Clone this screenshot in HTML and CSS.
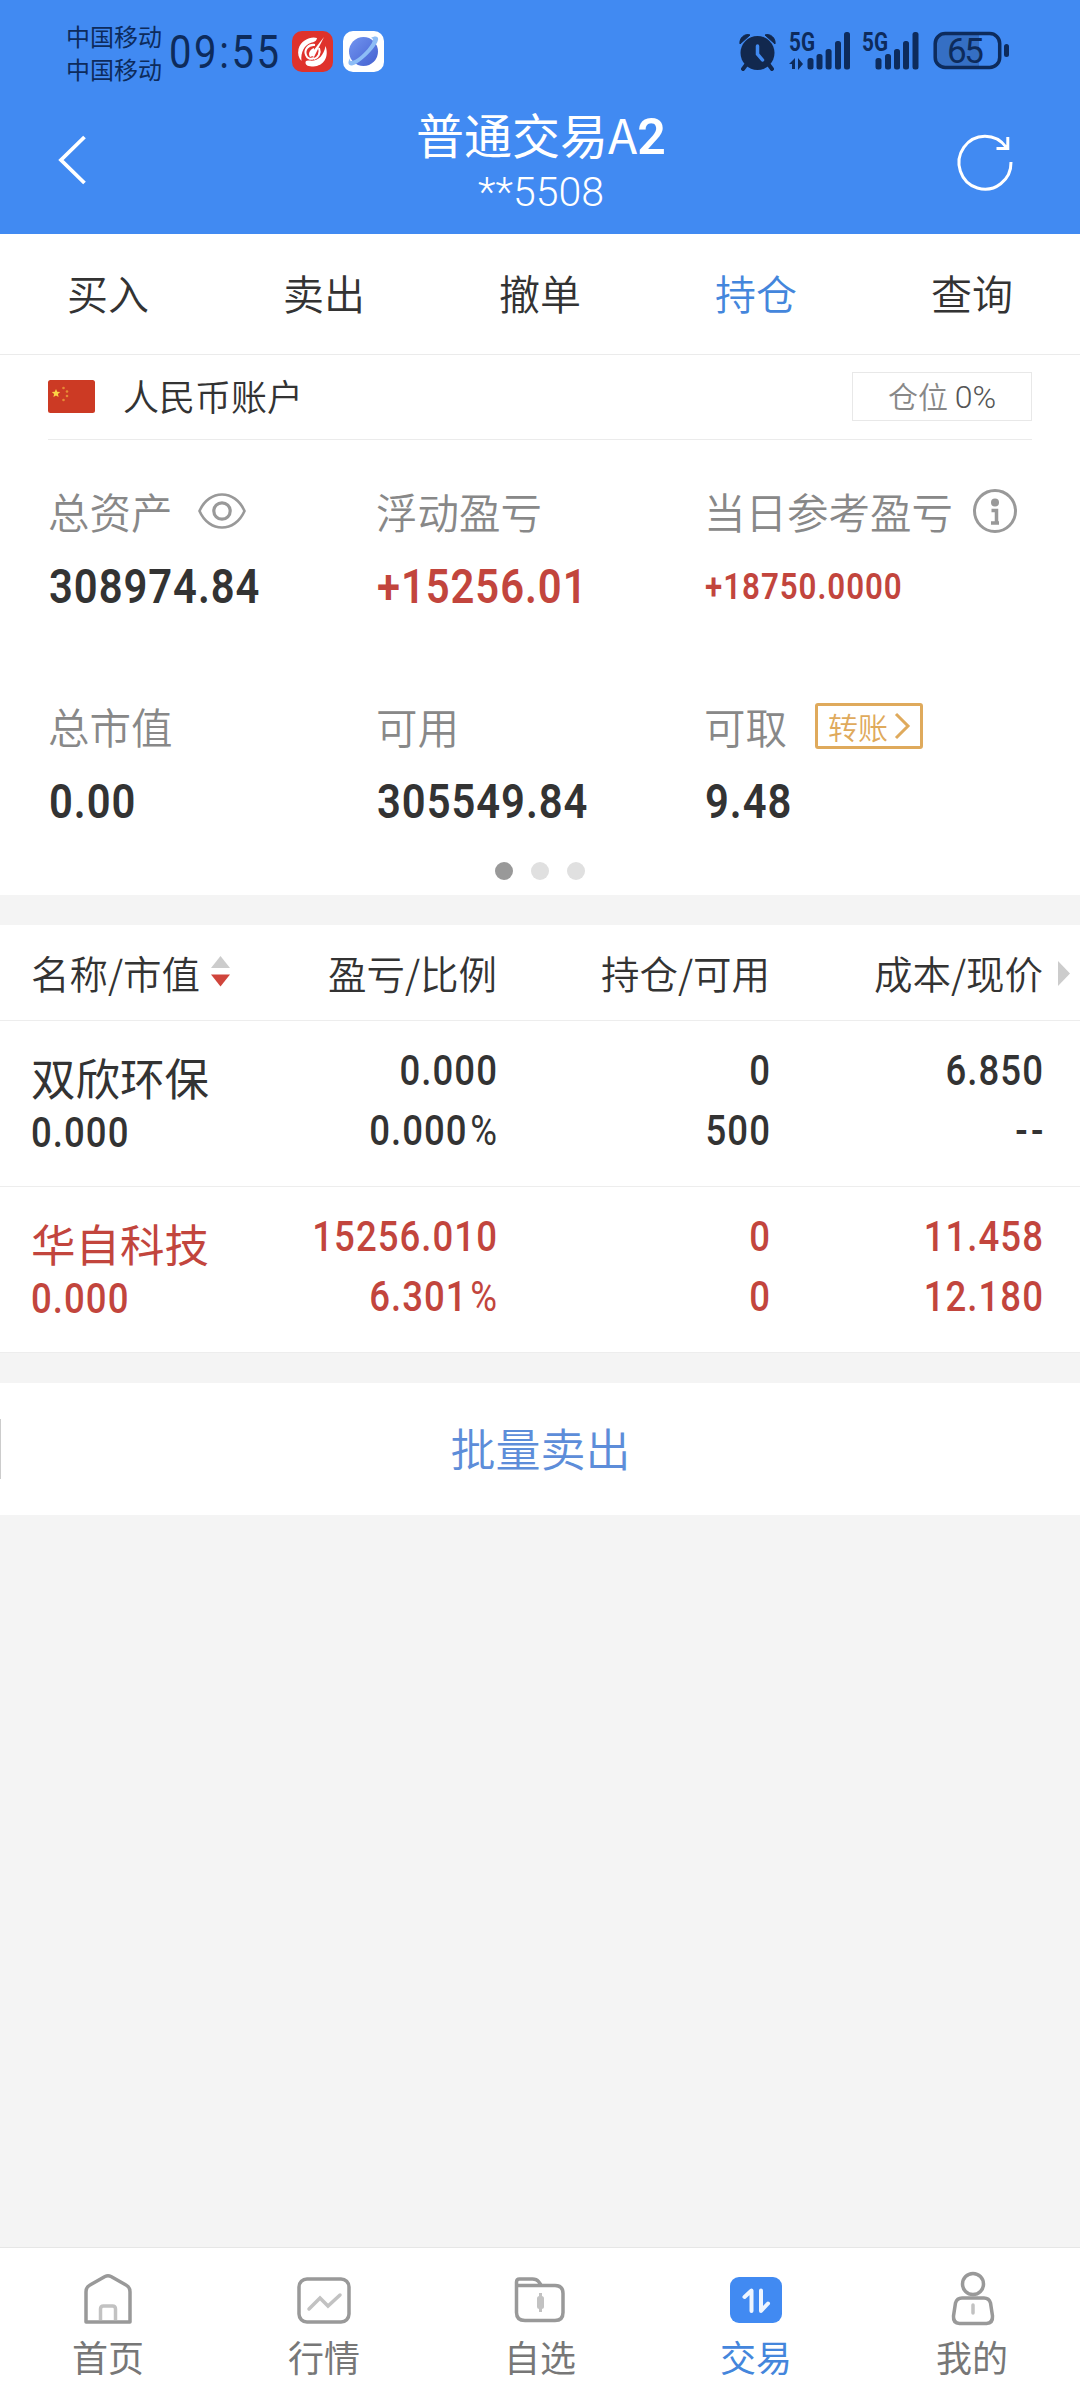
FILE: index.html
```html
<!DOCTYPE html>
<html lang="zh-CN">
<head>
<meta charset="utf-8">
<title>普通交易</title>
<link rel="stylesheet" href="styles.css">
</head>
<body>
<div id="header">
	<div class="status">
		<div class="carrier"><p>中国移动</p><p>中国移动</p></div>
		<span class="clock num">09:55</span>
		<svg class="app" width="41" height="41" viewBox="0 0 41 41">
			<rect width="41" height="41" rx="10" fill="#df322c"/>
			<path d="M25 7C19 5 9 9 6.500 18c-1 5 0 9 3 12-1-9 3-16 9-18 4-1 6-2 6.500-5z" fill="#fff"/>
			<path d="M33.500 15c4 11-2 20-12 20.500-5 0-8-1-8-4 0-2 2-2 4-2 8 1 14-4 16-14.500z" fill="#fff"/>
			<path d="M32 6L18 24l4 2z" fill="#fff"/>
			<path d="M23 14c-7-1-11 5-9 10 1 3 4 5 8 3M27 17c2 5-1 10-5 11" stroke="#fff" stroke-width="2" fill="none"/>
			<path d="M22 17c-5 2-6 6-4 9 4-1 5-4 4-9z" fill="#fff"/>
		</svg>
		<svg class="app" width="41" height="41" viewBox="0 0 41 41">
			<defs><linearGradient id="ball" x1="0" y1="0" x2="1" y2="1"><stop offset="0" stop-color="#7295f0"/><stop offset="1" stop-color="#4360d0"/></linearGradient></defs>
			<rect width="41" height="41" rx="10" fill="#fff"/>
			<circle cx="20.500" cy="20.500" r="14.500" fill="url(#ball)"/>
			<path d="M8 26c-4 5-3 9 1 8.500C17 33 37 13 35 7c-1-2-4-2-7 0 8 0-11 22-19 23-3 0-2-2-1-4z" fill="#8dbdf6"/>
		</svg>
		<svg class="signals" width="272" height="41" viewBox="738 31 272 41">
			<g fill="#12284e">
				<circle cx="757.500" cy="53" r="17"/>
				<path d="M740 44c-1-6 5-11 10-9zM775 44c1-6-5-11-10-9z" stroke="#12284e" stroke-width="1"/>
				<path d="M746 65l-3 4M769 65l3 4" stroke="#12284e" stroke-width="4" stroke-linecap="round"/>
				<path d="M757.500 46v8l5 6" fill="none" stroke="#418af2" stroke-width="3.500" stroke-linecap="round"/>
			</g>
			<g fill="#0d2b5c" class="sig">
				<text x="789" y="50.500" textLength="26" lengthAdjust="spacingAndGlyphs">5G</text>
				<path d="M789 64l6-6v11h-3v-5zM798 58l5 6-5 6z"/>
				<rect x="807.500" y="58" width="6" height="11.500" rx="2.500"/><rect x="816.500" y="54" width="6" height="15.500" rx="2.500"/><rect x="825.600" y="49" width="6" height="20.500" rx="2.500"/><rect x="835" y="41" width="6" height="28.500" rx="2.500"/><rect x="844" y="32" width="6" height="37.500" rx="2.500"/>
				<text x="862" y="50.500" textLength="26" lengthAdjust="spacingAndGlyphs">5G</text>
				<rect x="875.500" y="58" width="6" height="11.500" rx="2.500"/><rect x="885" y="54" width="6" height="15.500" rx="2.500"/><rect x="894" y="49" width="6" height="20.500" rx="2.500"/><rect x="903" y="41" width="6" height="28.500" rx="2.500"/><rect x="912.500" y="32" width="6" height="37.500" rx="2.500"/>
			</g>
			<path d="M945 35h34v31h-34q-9 0-9-9V44q0-9 9-9z" fill="#356fc4"/>
			<rect x="935.200" y="33.500" width="64.500" height="34" rx="10" fill="none" stroke="#0d2b5c" stroke-width="3.500"/>
			<rect x="1004" y="44" width="5" height="13" rx="2.500" fill="#0d2b5c"/>
			<text x="947" y="62.500" class="level" textLength="37" lengthAdjust="spacing">65</text>
		</svg>
	</div>
	<div class="bar">
		<svg width="32" height="54" viewBox="0 0 32 54"><path d="M27.500 4L4 27l23.500 23" fill="none" stroke="#fff" stroke-width="3.800"/></svg>
		<div class="title">
			<h1>普通交易A<b>2</b></h1>
			<p>**5508</p>
		</div>
		<svg width="56" height="58" viewBox="0 0 56 58"><path d="M54 29A26 26.500 0 1 1 49 14M39.500 15.500h11.300V4" fill="none" stroke="#fff" stroke-width="3"/></svg>
	</div>
</div>
<ul id="tabs">
	<li>买入</li>
	<li>卖出</li>
	<li>撤单</li>
	<li class="active">持仓</li>
	<li>查询</li>
</ul>
<div id="account">
	<div class="type">
		<svg width="47" height="33" viewBox="0 0 47 33">
			<rect width="47" height="33" rx="2.500" fill="#cc3a24"/>
			<path d="M8 9l1.200 2.800 3 .2-2.300 2 .7 3L8 15.400 5.400 17l.7-3-2.300-2 3-.2z" fill="#fbd545"/>
			<g fill="#e58b35"><circle cx="15.500" cy="8" r="1.300"/><circle cx="19" cy="11.500" r="1.300"/><circle cx="19" cy="16" r="1.300"/><circle cx="15.500" cy="20" r="1.300"/></g>
		</svg>
		<span>人民币账户</span>
		<div class="position">仓位 <em>0%</em></div>
	</div>
	<div class="assets">
		<div class="item">
			<p>总资产<svg class="eye" width="48" height="38" viewBox="0 0 48 38"><path d="M1.500 19C11-3 37-3 46.500 19 37 41 11 41 1.500 19z" fill="none" stroke="#999" stroke-width="2.600"/><circle cx="24" cy="19" r="8.200" fill="none" stroke="#999" stroke-width="3.200"/></svg></p>
			<strong class="num">308974.84</strong>
		</div>
		<div class="item">
			<p>浮动盈亏</p>
			<strong class="num red">+15256.01</strong>
		</div>
		<div class="item">
			<p>当日参考盈亏<svg class="info" width="44" height="44" viewBox="0 0 44 44"><circle cx="22" cy="22" r="20.500" fill="none" stroke="#999" stroke-width="3"/><circle cx="22" cy="13.500" r="4" fill="#999"/><path d="M18.500 21.500h5v12M18 34h8" fill="none" stroke="#999" stroke-width="3.500"/></svg></p>
			<strong class="num red small">+18750.0000</strong>
		</div>
		<div class="item">
			<p>总市值</p>
			<strong class="num">0.00</strong>
		</div>
		<div class="item">
			<p>可用</p>
			<strong class="num">305549.84</strong>
		</div>
		<div class="item">
			<p>可取<a class="transfer">转账<svg width="16" height="28" viewBox="0 0 16 28"><path d="M2 2l12 12L2 26" fill="none" stroke="#dfaa5c" stroke-width="3"/></svg></a></p>
			<strong class="num">9.48</strong>
		</div>
	</div>
	<div class="dots"><i class="on"></i><i></i><i></i></div>
</div>
<div id="stocks">
	<div class="row head">
		<div>名称/市值<svg width="19" height="31" viewBox="0 0 19 31"><path d="M9.500 0L19 12H0z" fill="#ccc"/><path d="M9.500 30.500L19 18.500H0z" fill="#d0453c"/></svg></div>
		<div>盈亏/比例</div>
		<div>持仓/可用</div>
		<div>成本/现价</div>
		<svg class="more" width="12" height="25" viewBox="0 0 12 25"><path d="M0 0l12 12.500L0 25z" fill="#ccc"/></svg>
	</div>
	<div class="row">
		<div><h2>双欣环保</h2><span class="num">0.000</span></div>
		<div><span class="num">0.000</span><span class="num">0.000<em>%</em></span></div>
		<div><span class="num">0</span><span class="num">500</span></div>
		<div><span class="num">6.850</span><span class="num dash">--</span></div>
	</div>
	<div class="row red">
		<div><h2>华自科技</h2><span class="num">0.000</span></div>
		<div><span class="num">15256.010</span><span class="num">6.301<em>%</em></span></div>
		<div><span class="num">0</span><span class="num">0</span></div>
		<div><span class="num">11.458</span><span class="num">12.180</span></div>
	</div>
</div>
<div id="sell"><a>批量卖出</a></div>
<ul id="nav">
	<li>
		<svg width="54" height="56" viewBox="0 0 54 56"><path d="M5 51V21q0-5 4-7L24 5.500q3-1.500 6 0L45 14q4 2 4 7v30z" fill="none" stroke="#999" stroke-width="3.500" stroke-linejoin="round"/><path d="M19.500 49V38q0-3 3-3h9q3 0 3 3v11" fill="none" stroke="#c2c2c2" stroke-width="3.500"/></svg>
		首页
	</li>
	<li>
		<svg width="54" height="56" viewBox="0 0 54 56"><rect x="2" y="8" width="50" height="43" rx="8" fill="none" stroke="#999" stroke-width="3.500"/><path d="M12 38l11-11 8 8 12-11" fill="none" stroke="#c2c2c2" stroke-width="3.500" stroke-linecap="round"/></svg>
		行情
	</li>
	<li>
		<svg width="54" height="56" viewBox="0 0 54 56"><path d="M3.500 15v-4q0-3 3-3h13q4 0 6 2.500l3 4H42q8 0 8 8v19q0 8-8 8H12q-8.500 0-8.500-8V14.500H28" fill="none" stroke="#999" stroke-width="3.500"/><path d="M27.500 22v19" stroke="#c2c2c2" stroke-width="3"/><rect x="24" y="25" width="7" height="13" rx="2.500" fill="#c2c2c2"/></svg>
		自选
	</li>
	<li class="active">
		<svg width="54" height="56" viewBox="0 0 54 56"><rect x="1" y="6" width="52" height="46" rx="9" fill="#418af2"/><path d="M15.500 26l7-6.500V40M32 19.500V40l7-7.500" fill="none" stroke="#eef5ff" stroke-width="4" stroke-linecap="round" stroke-linejoin="round"/></svg>
		交易
	</li>
	<li>
		<svg width="54" height="56" viewBox="0 0 54 56"><g fill="none" stroke="#999" stroke-width="3.500"><circle cx="28" cy="13" r="10.500"/><path d="M17 27h22q5 0 6.500 5l2 13q.5 7-6 7.500h-27q-6.500-.5-6-7.500l2-13q1.500-5 6.500-5z"/></g><path d="M28 34v8" stroke="#c2c2c2" stroke-width="3.500" stroke-linecap="round"/></svg>
		我的
	</li>
</ul>
</body>
</html>
```
FILE: styles.css
```css
*{
	margin:0;
	padding:0;
	box-sizing:border-box;
}
body{
	width:1080px;
	height:2400px;
	display:flex;
	flex-direction:column;
	background:#f4f4f4;
	color:#333;
	font-family:"Noto Sans CJK SC",sans-serif;
	font-weight:350;
	overflow:hidden;
}
ul{
	list-style:none;
}
em{
	font-style:normal;
}
svg{
	display:block;
	flex:none;
	overflow:visible;
}
.num{
	display:block;
	font-family:Roboto,sans-serif;
	font-weight:500;
	transform:scaleX(.87);
	transform-origin:left;
	white-space:nowrap;
}
.red{
	color:#c2453d;
}
/* header */
#header{
	height:234px;
	background:#418af2;
	color:#fff;
}
.status{
	height:103px;
	padding:0 70px 0 66px;
	display:flex;
	align-items:center;
	color:#0d2b5c;
}
.carrier{
	width:103px;
	padding-top:1px;
	font-size:24px;
	line-height:33px;
	font-weight:400;
}
.clock{
	width:123px;
	font-size:46px;
	font-weight:400;
	letter-spacing:3px;
}
.app{
	margin-right:10px;
}
.signals{
	margin-left:auto;
}
.sig text{
	font:700 25px Roboto,sans-serif;
}
.level{
	font:400 35px Roboto,sans-serif;
	fill:#0d2b5c;
}
.bar{
	height:131px;
	padding:0 67px 0 57px;
	display:flex;
	justify-content:space-between;
}
.bar svg{
	margin-top:30px;
}
.title{
	margin-left:36px;
	text-align:center;
}
.title h1{
	height:65px;
	font-size:48px;
	line-height:61px;
	font-weight:400;
}
.title b{
	font-family:Roboto,sans-serif;
	font-weight:600;
	font-size:50px;
	line-height:1;
}
.title p{
	font-family:Roboto,sans-serif;
	font-size:41px;
	font-weight:300;
	line-height:48px;
}
/* tabs */
#tabs{
	height:121px;
	display:flex;
	background:#fff;
	border-bottom:1px solid #ebebeb;
}
#tabs li{
	flex:1;
	text-align:center;
	font-size:41px;
	line-height:116px;
}
#tabs .active{
	color:#4486dc;
}
/* account */
#account{
	height:540px;
	padding:0 48px;
	background:#fff;
}
.type{
	height:85px;
	padding-bottom:1px;
	display:flex;
	align-items:center;
	border-bottom:1px solid #ebebeb;
	font-size:36px;
}
.type span{
	height:56px;
	margin-left:28px;
	line-height:52px;
}
.position{
	width:180px;
	height:49px;
	margin-left:auto;
	border:1px solid #e8e8e8;
	text-align:center;
	font-size:30px;
	line-height:45px;
	color:#888;
}
.position em{
	font-family:Roboto,sans-serif;
	font-size:32px;
	font-weight:300;
	color:#555;
}
.assets{
	display:grid;
	grid-template-columns:repeat(3,328px);
	grid-template-rows:215px 166px;
	padding-top:39px;
}
.item p{
	height:64px;
	padding-bottom:1px;
	display:flex;
	align-items:center;
	font-size:41.500px;
	line-height:60px;
	color:#888;
	white-space:nowrap;
}
.item .num{
	margin-left:1px;
	font-size:48px;
	line-height:88px;
	font-weight:600;
	letter-spacing:1.100px;
}
.item .small{
	font-size:36px;
}
.eye{
	margin-left:25px;
}
.info{
	margin-left:20px;
}
.transfer{
	width:108px;
	height:46px;
	margin-left:28px;
	border:3px solid #dfaa5c;
	border-radius:3px;
	display:flex;
	align-items:center;
	justify-content:center;
	gap:6px;
	font-size:30px;
	line-height:38px;
	color:#dfaa5c;
}
.dots{
	padding-top:2px;
	display:flex;
	justify-content:center;
	gap:18px;
}
.dots i{
	width:18px;
	height:18px;
	border-radius:50%;
	background:#e0e0e0;
}
.dots .on{
	background:#999;
}
/* stocks */
#stocks{
	margin-top:30px;
	background:#fff;
}
.row{
	height:166px;
	padding:20px 37px 0 31px;
	display:grid;
	grid-template-columns:200px 266px 273px 273px;
	border-bottom:1px solid #ededed;
}
.row div{
	text-align:right;
}
.row div:first-child{
	text-align:left;
}
.row .num{
	font-size:42px;
	line-height:60px;
	letter-spacing:1.200px;
	margin-right:-1px;
	transform-origin:right;
}
.row div:first-child .num{
	transform-origin:left;
	line-height:50px;
}
.row em{
	font-weight:400;
	margin-left:3px;
}
.row .dash{
	letter-spacing:4px;
	margin-right:-4px;
}
.row h2{
	padding-top:5px;
	font-size:44.500px;
	line-height:62px;
	font-weight:400;
}
.head{
	height:96px;
	padding-top:0;
	padding-bottom:2px;
	align-items:center;
	font-size:38.500px;
	position:relative;
}
.head div:first-child{
	display:flex;
	align-items:center;
	gap:11px;
	white-space:nowrap;
}
.more{
	position:absolute;
	right:10px;
	top:36px;
}
/* sell */
#sell{
	height:132px;
	margin-top:30px;
	display:flex;
	align-items:center;
	background:#fff;
}
#sell a{
	flex:1;
	height:60px;
	border-left:1px solid #ccc;
	text-align:center;
	font-size:45px;
	line-height:57px;
	color:#5d8dd9;
}
/* nav */
#nav{
	height:153px;
	margin-top:auto;
	display:flex;
	background:#fff;
	border-top:1px solid #e6e6e6;
}
#nav li{
	flex:1;
	padding-top:23px;
	display:flex;
	flex-direction:column;
	align-items:center;
	font-size:36px;
	line-height:58px;
	font-weight:400;
	color:#777;
}
#nav .active{
	color:#4486dc;
}
```
